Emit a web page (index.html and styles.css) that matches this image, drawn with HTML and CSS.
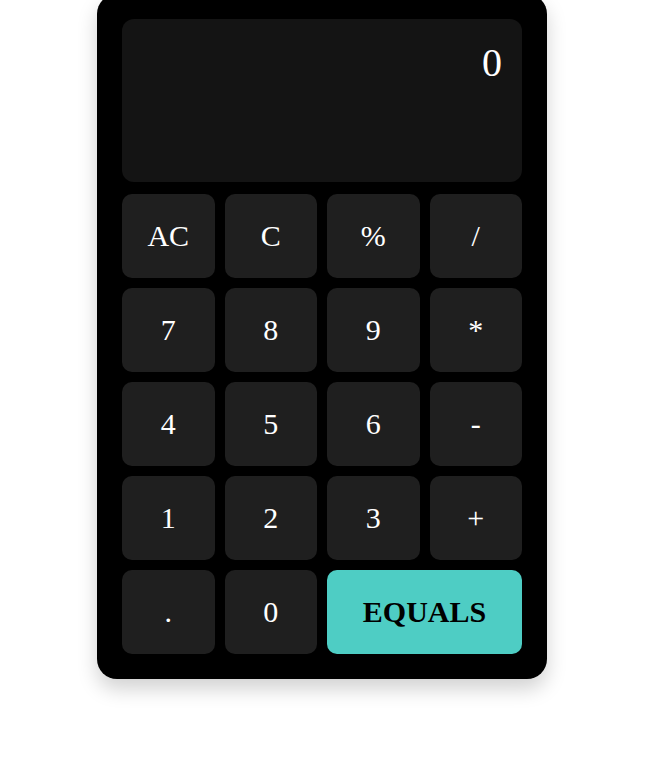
FILE: index.html
```html
<!DOCTYPE html>
<html>
<head>
<meta charset="utf-8">
<link rel="stylesheet" href="styles.css">
</head>
<body>
<div class="page">
<div class="calc">
  <div class="display">0</div>
  <div class="keys">
    <button class="key">AC</button>
    <button class="key">C</button>
    <button class="key">%</button>
    <button class="key">/</button>
    <button class="key">7</button>
    <button class="key">8</button>
    <button class="key">9</button>
    <button class="key">*</button>
    <button class="key">4</button>
    <button class="key">5</button>
    <button class="key">6</button>
    <button class="key">-</button>
    <button class="key">1</button>
    <button class="key">2</button>
    <button class="key">3</button>
    <button class="key">+</button>
    <button class="key">.</button>
    <button class="key">0</button>
    <button class="key equals">EQUALS</button>
  </div>
</div>
</div>
</body>
</html>
```
FILE: styles.css
```css
body {
  margin: 0;
  padding: 0;
  background: #ffffff;
  font-family: "Liberation Serif", "Times New Roman", serif;
}
.page {
  height: 761px;
  overflow: hidden;
}
.calc {
  box-sizing: border-box;
  width: 450px;
  margin: -6px 0 0 97px;
  padding: 25px;
  background: #000000;
  border-radius: 20px;
  box-shadow: 0 10px 20px rgba(0, 0, 0, 0.18);
}
.display {
  box-sizing: border-box;
  height: 163px;
  padding: 20px;
  background: #141414;
  border-radius: 12px;
  color: #ffffff;
  font-size: 40px;
  text-align: right;
  margin-bottom: 12px;
}
.keys {
  display: grid;
  grid-template-columns: repeat(4, 1fr);
  grid-auto-rows: 84px;
  gap: 10px;
}
.key {
  border: none;
  margin: 0;
  padding: 0;
  background: #1f1f1f;
  color: #ffffff;
  border-radius: 10px;
  font-family: "Liberation Serif", "Times New Roman", serif;
  font-size: 30px;
}
.equals {
  grid-column: span 2;
  background: #4ecdc4;
  color: #000000;
  font-weight: bold;
}
```
